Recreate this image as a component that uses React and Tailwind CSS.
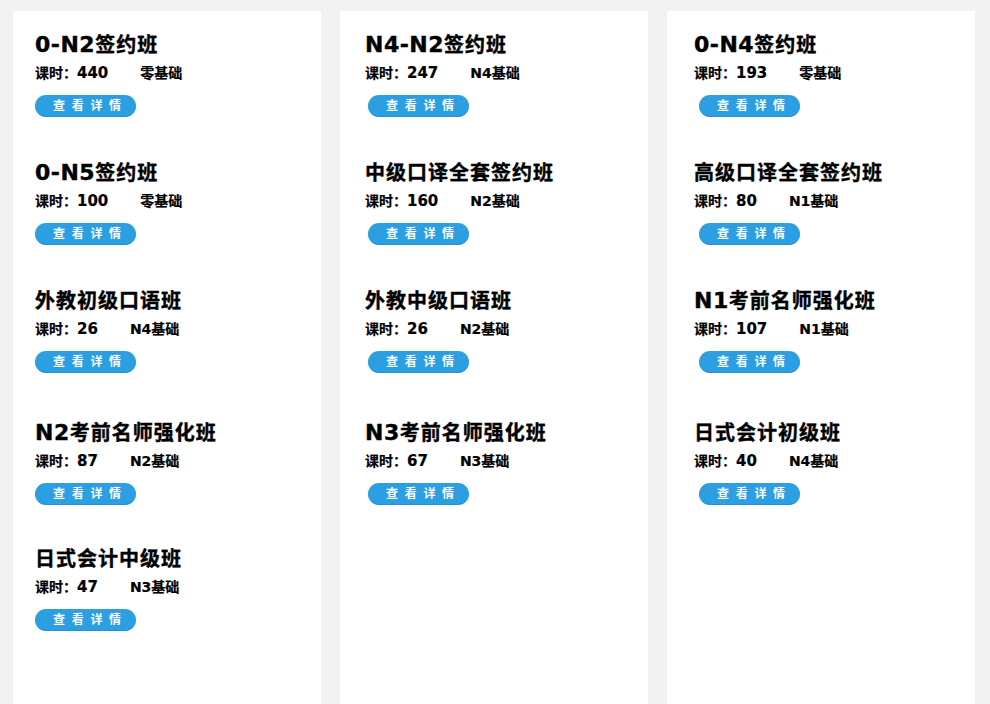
const columns = [
  {
    pad: "pl-[22px]",
    btn: "ml-0",
    items: [
      { title: "0-N2签约班", hours: "440", level: "零基础" },
      { title: "0-N5签约班", hours: "100", level: "零基础" },
      { title: "外教初级口语班", hours: "26", level: "N4基础" },
      { title: "N2考前名师强化班", hours: "87", level: "N2基础" },
      { title: "日式会计中级班", hours: "47", level: "N3基础" },
    ],
  },
  {
    pad: "pl-[25px]",
    btn: "ml-[3px]",
    items: [
      { title: "N4-N2签约班", hours: "247", level: "N4基础" },
      { title: "中级口译全套签约班", hours: "160", level: "N2基础" },
      { title: "外教中级口语班", hours: "26", level: "N2基础" },
      { title: "N3考前名师强化班", hours: "67", level: "N3基础" },
    ],
  },
  {
    pad: "pl-[27px]",
    btn: "ml-[5px]",
    items: [
      { title: "0-N4签约班", hours: "193", level: "零基础" },
      { title: "高级口译全套签约班", hours: "80", level: "N1基础" },
      { title: "N1考前名师强化班", hours: "107", level: "N1基础" },
      { title: "日式会计初级班", hours: "40", level: "N4基础" },
    ],
  },
];

const rowHeights = ["h-[128px]", "h-[128px]", "h-[132px]", "h-[126px]", "h-[126px]"];

function Title({ text }) {
  const parts = text.split(/([A-Za-z0-9-]+)/).filter(Boolean);
  return (
    <div className="h-[28px] leading-[28px] text-[20px] tracking-[1px] font-bold text-black whitespace-nowrap [-webkit-text-stroke:0.4px_black]">
      {parts.map((p, i) =>
        /^[A-Za-z0-9-]+$/.test(p) ? (
          <span key={i} className="text-[22px] tracking-[0.5px]">
            {p}
          </span>
        ) : (
          <span key={i}>{p}</span>
        )
      )}
    </div>
  );
}

function Item({ item, idx, btn }) {
  return (
    <div className={`${rowHeights[idx]} shrink-0`}>
      <Title text={item.title} />
      <div className="mt-[4px] h-[20px] leading-[20px] text-[14px] font-bold text-black whitespace-nowrap flex items-center [-webkit-text-stroke:0.2px_black]">
        <span>课时：</span>
        <span className="text-[15px]">{item.hours}</span>
        <span className="ml-[32px]">{item.level}</span>
      </div>
      <div
        className={`${btn} mt-[12px] w-[101px] h-[22px] rounded-full bg-[#2b9fe2] border-b border-[#2590d2] flex items-center pl-[18px] text-white text-[12px] font-bold tracking-[6.7px] leading-none whitespace-nowrap`}
      >
        查看详情
      </div>
    </div>
  );
}

export default function App() {
  return (
    <div
      className="w-[990px] h-[704px] overflow-hidden bg-[#f2f2f2] pt-[11px] pl-[13px] flex gap-[19px]"
      style={{ fontFamily: '"DejaVu Sans", "Noto Sans CJK SC", sans-serif' }}
    >
      {columns.map((col, ci) => (
        <div key={ci} className={`w-[308px] h-[760px] shrink-0 bg-white pt-[20px] ${col.pad} flex flex-col`}>
          {col.items.map((item, i) => (
            <Item key={i} item={item} idx={i} btn={col.btn} />
          ))}
        </div>
      ))}
    </div>
  );
}
